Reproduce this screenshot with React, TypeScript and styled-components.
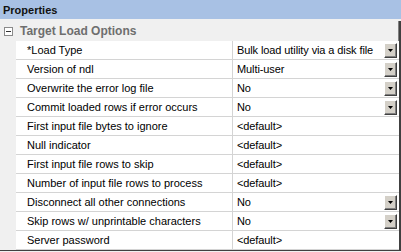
import React from "react";
import styled, { createGlobalStyle } from "styled-components";

const Global = createGlobalStyle`
  html, body { margin: 0; padding: 0; background: #ffffff; }
  #root { width: 401px; height: 252px; }
`;

const Frame = styled.div`
  width: 401px;
  height: 252px;
  background: #f0f0f0;
  font-family: "Liberation Sans", Arial, sans-serif;
  font-size: 11px;
  color: #000;
  display: flex;
  flex-direction: column;
  overflow: hidden;
`;

const Header = styled.div`
  height: 19px;
  background: #a8c1e4;
  display: flex;
  align-items: center;
  padding-left: 3px;
  font-weight: bold;
  font-size: 11px;
  color: #111;
  flex-shrink: 0;
`;

const Grid = styled.div`
  width: 399px;
  display: flex;
  flex-direction: column;
  border-right: 2px solid #404040;
  box-shadow: inset -1px 0 0 #808080;
  border-bottom: 1px solid #404040;
  margin-top: 2px;
`;

const Category = styled.div`
  height: 20px;
  display: flex;
  align-items: center;
  gap: 7px;
  padding-left: 4px;
  font-weight: bold;
  font-size: 12px;
  color: #6e6e6e;
`;

const Row = styled.div`
  display: grid;
  grid-template-columns: 16px 216px 1fr;
  height: 19px;
`;

const Margin = styled.div`
  background: #f0f0f0;
`;

const Cell = styled.div<{ $value?: boolean }>`
  background: #ffffff;
  border-bottom: 1px solid #d4d4d4;
  display: flex;
  align-items: center;
  padding-left: ${(p) => (p.$value ? "4px" : "11px")};
  border-left: ${(p) => (p.$value ? "1px solid #d4d4d4" : "none")};
  white-space: nowrap;
  overflow: hidden;
  padding-right: 1px;
  letter-spacing: ${(p) => (p.$value ? "-0.1px" : "0")};
`;

const Text = styled.span`
  flex: 1;
`;

const DropButton = styled.div`
  width: 13px;
  height: 15px;
  box-sizing: border-box;
  background: #d4d0c8;
  border-top: 1px solid #ffffff;
  border-left: 1px solid #ffffff;
  border-right: 1px solid #404040;
  border-bottom: 1px solid #404040;
  box-shadow: inset -1px -1px 0 #808080;
  display: flex;
  align-items: center;
  justify-content: center;
  flex-shrink: 0;
  margin-right: 1px;
`;

const Last = styled.div`
  flex: 1;
  background: #f0f0f0;
`;

const Arrow = () => (
  <svg width="5" height="3" viewBox="0 0 5 3">
    <path d="M0 0h5L2.5 3z" fill="#000" />
  </svg>
);

const MinusBox = () => (
  <svg width="9" height="9" viewBox="0 0 9 9">
    <rect x="0.5" y="0.5" width="8" height="8" fill="#fff" stroke="#8a8a8a" />
    <path d="M2 4.5h5" stroke="#333" strokeWidth="1" />
  </svg>
);

type Prop = { label: string; value: string; drop?: boolean };

const props: Prop[] = [
  { label: "*Load Type", value: "Bulk load utility via a disk file", drop: true },
  { label: "Version of ndl", value: "Multi-user", drop: true },
  { label: "Overwrite the error log file", value: "No", drop: true },
  { label: "Commit loaded rows if error occurs", value: "No", drop: true },
  { label: "First input file bytes to ignore", value: "<default>" },
  { label: "Null indicator", value: "<default>" },
  { label: "First input file rows to skip", value: "<default>" },
  { label: "Number of input file rows to process", value: "<default>" },
  { label: "Disconnect all other connections", value: "No", drop: true },
  { label: "Skip rows w/ unprintable characters", value: "No", drop: true },
  { label: "Server password", value: "<default>" },
];

export default function App() {
  return (
    <>
      <Global />
      <Frame>
        <Header>Properties</Header>
        <Grid>
          <Category>
            <MinusBox />
            <span>Target Load Options</span>
          </Category>
          {props.map((p) => (
            <Row key={p.label}>
              <Margin />
              <Cell>{p.label}</Cell>
              <Cell $value>
                <Text>{p.value}</Text>
                {p.drop && (
                  <DropButton>
                    <Arrow />
                  </DropButton>
                )}
              </Cell>
            </Row>
          ))}
        </Grid>
        <Last />
      </Frame>
    </>
  );
}
